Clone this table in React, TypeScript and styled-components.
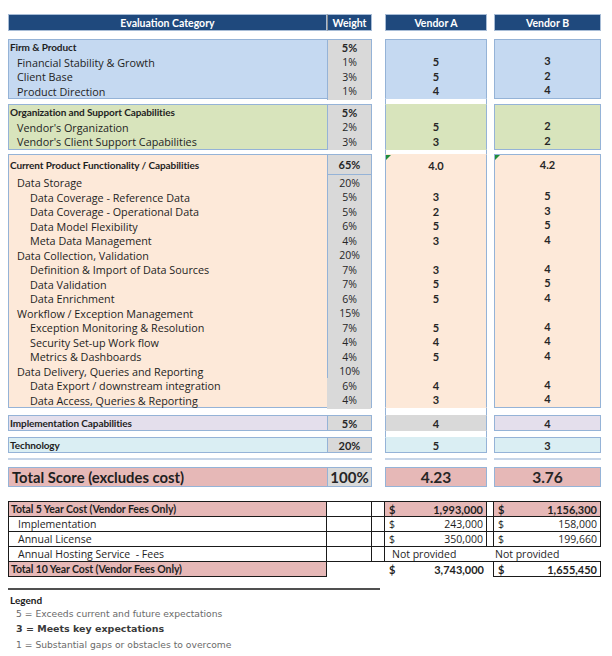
import React from 'react';
import styled, { createGlobalStyle } from 'styled-components';

const GlobalStyle = createGlobalStyle`
  html, body { margin: 0; padding: 0; background: #ffffff; }
  body { font-family: Lato, "Open Sans", sans-serif; color: #1e1e1e; }
  * { box-sizing: border-box; }
`;

const COLS = '319px 45px 13px 102px 7px 107px';
const COST_COLS = '319px 45px 6px 7px 102px 7px 107px';
const EDGE = '#95B3D7';
const ROW = 14.5;
const BODY_FONT = '"Open Sans", "Noto Sans", sans-serif';
const BOLD_FONT = 'Lato, "Open Sans", sans-serif';

const C = {
  navy: '#1F497D',
  blue: '#C5D9F1',
  green: '#D8E4BC',
  peach: '#FDE9D9',
  gray: '#D9D9D9',
  lavender: '#E4DFEC',
  cyan: '#DAEEF3',
  pink: '#E6B8B7',
  white: '#FFFFFF',
};

const Page = styled.div`
  width: 612px;
  height: 656px;
  padding: 14px 0 0 8px;
  overflow: hidden;
`;

const Band = styled.div<{ $h?: number }>`
  display: grid;
  grid-template-columns: ${COLS};
  ${(p) => (p.$h !== undefined ? `height: ${p.$h}px;` : '')}
`;

const HeadCell = styled.div<{ $col: number; $join?: boolean }>`
  grid-column: ${(p) => p.$col};
  height: 17px;
  background: ${C.navy};
  color: #ffffff;
  font-family: ${BOLD_FONT};
  font-weight: 700;
  font-size: 10.5px;
  display: flex;
  align-items: center;
  justify-content: center;
  border: 1px solid #A7BCD6;
  ${(p) => (p.$join ? 'border-left: 1px solid #8C8C8C;' : '')}
`;

const AGap = styled.div`
  grid-column: 4;
  border-left: 1px solid ${EDGE};
  border-right: 1px solid ${EDGE};
  background: #ffffff;
`;

const LeftBox = styled.div<{ $bg: string }>`
  grid-column: 1 / span 2;
  border: 1px solid ${EDGE};
  background: ${(p) => p.$bg};
  display: flex;
  flex-direction: column;
`;

const LRow = styled.div<{ $h?: number }>`
  display: grid;
  grid-template-columns: 318px 44px;
  height: ${(p) => p.$h ?? ROW}px;
`;

const Label = styled.div<{ $level: number; $title?: boolean; $big?: boolean }>`
  display: flex;
  align-items: center;
  padding-left: ${(p) => (p.$level === 0 ? (p.$big ? 3 : 1) : p.$level === 1 ? 8 : 21)}px;
  padding-bottom: ${(p) => (p.$title ? 0 : 1)}px;
  font-family: ${(p) => (p.$title ? BOLD_FONT : BODY_FONT)};
  font-size: ${(p) => (p.$big ? 14.8 : p.$title ? 10 : 10.8)}px;
  font-weight: ${(p) => (p.$title ? 700 : 400)};
  letter-spacing: ${(p) => (p.$title && !p.$big ? -0.1 : 0)}px;
  white-space: nowrap;
  color: #1e1e1e;
`;

const Weight = styled.div<{ $bold?: boolean; $big?: boolean; $underline?: boolean; $noEdge?: boolean }>`
  background: ${C.gray};
  border-left: 1px solid ${(p) => (p.$noEdge ? C.gray : EDGE)};
  ${(p) => (p.$underline ? `border-bottom: 1px solid ${EDGE};` : '')}
  display: flex;
  align-items: center;
  justify-content: center;
  padding-bottom: ${(p) => (p.$bold ? 0 : 1)}px;
  font-family: ${(p) => (p.$bold ? BOLD_FONT : BODY_FONT)};
  font-size: ${(p) => (p.$big ? 15 : p.$bold ? 11 : 10.5)}px;
  font-weight: ${(p) => (p.$bold ? 700 : 400)};
  color: #262626;
`;

const VendorA = styled.div<{ $bg: string; $first?: boolean; $last?: boolean }>`
  grid-column: 4;
  background: ${(p) => p.$bg};
  border-left: 1px solid ${EDGE};
  border-right: 1px solid ${EDGE};
  border-top: 1px solid ${(p) => (p.$first ? EDGE : p.$bg)};
  border-bottom: 1px solid ${(p) => (p.$last ? EDGE : p.$bg)};
  display: flex;
  flex-direction: column;
`;

const VendorB = styled.div<{ $bg: string }>`
  grid-column: 6;
  background: ${(p) => p.$bg};
  border: 1px solid ${EDGE};
  display: flex;
  flex-direction: column;
`;

const TotalBox = styled(VendorB)`
  grid-column: 4;
`;

const Score = styled.div<{ $h?: number; $big?: boolean }>`
  position: relative;
  height: ${(p) => p.$h ?? ROW}px;
  display: flex;
  align-items: center;
  justify-content: center;
  font-family: ${BOLD_FONT};
  font-size: ${(p) => (p.$big ? 15.5 : 11)}px;
  font-weight: 700;
  color: #262626;
`;

const Flag = styled.span`
  position: absolute;
  left: 0;
  top: 0;
  width: 0;
  height: 0;
  border-top: 5px solid #1E8C3A;
  border-right: 5px solid transparent;
`;

const RuleBand = styled(Band)`
  margin-top: 5px;
  height: 2px;
`;

const Rule = styled.div<{ $col: string }>`
  grid-column: ${(p) => p.$col};
  border-top: 2px solid #C6D5E8;
`;

/* ---------- cost table ---------- */

const CostGrid = styled.div`
  display: grid;
  grid-template-columns: ${COST_COLS};
  margin-top: 14px;
`;

type Side = { t?: boolean; r?: boolean; b?: boolean; l?: boolean };

const CostCell = styled.div<{ $s: Side; $bg?: string; $h: number; $bold?: boolean; $pad?: number }>`
  height: ${(p) => p.$h}px;
  background: ${(p) => p.$bg ?? '#ffffff'};
  border-top: ${(p) => (p.$s.t ? '1px solid #1a1a1a' : 'none')};
  border-right: ${(p) => (p.$s.r ? '1px solid #1a1a1a' : 'none')};
  border-bottom: ${(p) => (p.$s.b ? '1px solid #1a1a1a' : 'none')};
  border-left: ${(p) => (p.$s.l ? '1px solid #1a1a1a' : 'none')};
  display: flex;
  align-items: center;
  justify-content: space-between;
  padding: 0 3px 0 ${(p) => p.$pad ?? 3}px;
  font-family: ${(p) => (p.$bold ? BOLD_FONT : BODY_FONT)};
  font-size: 10.5px;
  font-weight: ${(p) => (p.$bold ? 700 : 400)};
  letter-spacing: ${(p) => (p.$bold ? -0.1 : 0)}px;
  white-space: pre;
  color: #1e1e1e;
`;

const Money = styled.span<{ $bold?: boolean }>`
  font-family: ${(p) => (p.$bold ? BOLD_FONT : BODY_FONT)};
  font-size: ${(p) => (p.$bold ? 11 : 10.5)}px;
  font-weight: ${(p) => (p.$bold ? 700 : 400)};
  letter-spacing: 0;
`;

/* ---------- legend ---------- */

const Legend = styled.div`
  margin-top: 11px;
  width: 372px;
  border-top: 2px solid #505050;
  padding-top: 3px;
  display: flex;
  flex-direction: column;
`;

const LegendTitle = styled.div`
  height: 13px;
  padding-left: 2px;
  font-family: ${BOLD_FONT};
  font-size: 10px;
  font-weight: 700;
  color: #1a1a1a;
  display: flex;
  align-items: center;
`;

const LegendItem = styled.div<{ $strong?: boolean; $h: number }>`
  height: ${(p) => p.$h}px;
  padding-left: 8px;
  font-family: "DejaVu Sans", Verdana, sans-serif;
  font-size: ${(p) => (p.$strong ? 9.5 : 9.2)}px;
  font-weight: ${(p) => (p.$strong ? 700 : 400)};
  color: ${(p) => (p.$strong ? '#3a3a3a' : '#6a6a6a')};
  display: flex;
  align-items: center;
  white-space: nowrap;
`;

/* ---------- data ---------- */

type Item = { label: string; level: number; weight: string; a?: string; b?: string; noEdge?: boolean };

type Section = {
  title: string;
  weight: string;
  bg: string;
  a?: string;
  b?: string;
  titleH?: number;
  items: Item[];
};

const sections: Section[] = [
  {
    title: 'Firm & Product',
    weight: '5%',
    bg: C.blue,
    items: [
      { label: 'Financial Stability & Growth', level: 1, weight: '1%', a: '5', b: '3' },
      { label: 'Client Base', level: 1, weight: '3%', a: '5', b: '2' },
      { label: 'Product Direction', level: 1, weight: '1%', a: '4', b: '4' },
    ],
  },
  {
    title: 'Organization and Support Capabilities',
    weight: '5%',
    bg: C.green,
    items: [
      { label: "Vendor's Organization", level: 1, weight: '2%', a: '5', b: '2' },
      { label: "Vendor's Client Support Capabilities", level: 1, weight: '3%', a: '3', b: '2' },
    ],
  },
  {
    title: 'Current Product Functionality / Capabilities',
    weight: '65%',
    bg: C.peach,
    a: '4.0',
    b: '4.2',
    titleH: 20,
    items: [
      { label: 'Data Storage', level: 1, weight: '20%' },
      { label: 'Data Coverage - Reference Data', level: 2, weight: '5%', a: '3', b: '5' },
      { label: 'Data Coverage - Operational Data', level: 2, weight: '5%', a: '2', b: '3' },
      { label: 'Data Model Flexibility', level: 2, weight: '6%', a: '5', b: '5' },
      { label: 'Meta Data Management', level: 2, weight: '4%', a: '3', b: '4' },
      { label: 'Data Collection, Validation', level: 1, weight: '20%' },
      { label: 'Definition & Import of Data Sources', level: 2, weight: '7%', a: '3', b: '4' },
      { label: 'Data Validation', level: 2, weight: '7%', a: '5', b: '5' },
      { label: 'Data Enrichment', level: 2, weight: '6%', a: '5', b: '4' },
      { label: 'Workflow / Exception Management', level: 1, weight: '15%' },
      { label: 'Exception Monitoring & Resolution', level: 2, weight: '7%', a: '5', b: '4' },
      { label: 'Security Set-up Work flow', level: 2, weight: '4%', a: '4', b: '4' },
      { label: 'Metrics & Dashboards', level: 2, weight: '4%', a: '5', b: '4' },
      { label: 'Data Delivery, Queries and Reporting', level: 1, weight: '10%' },
      { label: 'Data Export / downstream integration', level: 2, weight: '6%', a: '4', b: '4', noEdge: true },
      { label: 'Data Access, Queries & Reporting', level: 2, weight: '4%', a: '3', b: '4', noEdge: true },
    ],
  },
];

const gapsAfter = [5, 4.5];

function SectionBand({ s, first }: { s: Section; first?: boolean }) {
  const th = s.titleH ?? ROW;
  const flagged = s.a !== undefined;
  return (
    <Band>
      <LeftBox $bg={s.bg}>
        <LRow $h={th}>
          <Label $level={0} $title>{s.title}</Label>
          <Weight $bold $underline={flagged}>{s.weight}</Weight>
        </LRow>
        {s.items.map((it) => (
          <LRow key={it.label}>
            <Label $level={it.level}>{it.label}</Label>
            <Weight $noEdge={it.noEdge}>{it.weight}</Weight>
          </LRow>
        ))}
      </LeftBox>
      <VendorA $bg={s.bg} $first={first}>
        <Score $h={th}>
          {flagged && <Flag />}
          {s.a}
        </Score>
        {s.items.map((it) => (
          <Score key={it.label}>{it.a}</Score>
        ))}
      </VendorA>
      <VendorB $bg={s.bg}>
        <Score $h={th - 1}>
          {flagged && <Flag />}
          {s.b}
        </Score>
        {s.items.map((it) => (
          <Score key={it.label}>{it.b}</Score>
        ))}
      </VendorB>
    </Band>
  );
}

function SingleBand({
  title, weight, bg, aBg, a, b, last, h,
}: { title: string; weight: string; bg: string; aBg: string; a: string; b: string; last?: boolean; h: number }) {
  return (
    <Band>
      <LeftBox $bg={bg}>
        <LRow $h={h}>
          <Label $level={0} $title>{title}</Label>
          <Weight $bold>{weight}</Weight>
        </LRow>
      </LeftBox>
      <VendorA $bg={aBg} $last={last}>
        <Score $h={h}>{a}</Score>
      </VendorA>
      <VendorB $bg={bg}>
        <Score $h={h}>{b}</Score>
      </VendorB>
    </Band>
  );
}

type CostRowData = {
  label: string;
  total?: boolean;
  a: string | null;
  b: string | null;
  h: number;
  kind: 'top' | 'mid' | 'note' | 'end';
};

const costRows: CostRowData[] = [
  { label: 'Total 5 Year Cost (Vendor Fees Only)', total: true, a: '1,993,000', b: '1,156,300', h: 16, kind: 'top' },
  { label: 'Implementation', a: '243,000', b: '158,000', h: 15, kind: 'mid' },
  { label: 'Annual License', a: '350,000', b: '199,660', h: 15, kind: 'mid' },
  { label: 'Annual Hosting Service  - Fees', a: null, b: null, h: 15, kind: 'note' },
  { label: 'Total 10 Year Cost (Vendor Fees Only)', total: true, a: '3,743,000', b: '1,655,450', h: 15, kind: 'end' },
];

function CostRow({ r }: { r: CostRowData }) {
  const t = r.kind === 'top';
  const end = r.kind === 'end';
  const note = r.kind === 'note';
  const bg = r.total && !end ? C.pink : undefined;
  const money = (v: string | null, bold: boolean) =>
    v === null ? (
      <span>Not provided</span>
    ) : (
      <>
        <Money $bold={bold}>$</Money>
        <Money $bold={bold}>{v}</Money>
      </>
    );
  return (
    <>
      <CostCell $h={r.h} $s={{ t, l: true, r: true, b: true }} $bg={r.total ? C.pink : undefined} $bold={r.total} $pad={r.total ? 2 : 9}>
        {r.label}
      </CostCell>
      {[0, 1, 2].map((i) => (
        <CostCell key={i} $h={r.h} $s={end ? {} : { t, r: true, b: true }} />
      ))}
      <CostCell $h={r.h} $s={end ? {} : { t, r: !note, b: true }} $bg={bg} $pad={note ? 7 : 4}>
        {money(r.a, !!r.total)}
      </CostCell>
      <CostCell $h={r.h} $s={end ? { r: true } : { t, r: !note, b: true }} />
      <CostCell $h={r.h} $s={end ? { r: true, b: true } : { t, r: !note, b: true }} $bg={bg} $pad={note ? 1 : 4}>
        {money(r.b, !!r.total)}
      </CostCell>
    </>
  );
}

export default function App() {
  return (
    <>
      <GlobalStyle />
      <Page>
        <Band>
          <HeadCell $col={1}>Evaluation Category</HeadCell>
          <HeadCell $col={2} $join>Weight</HeadCell>
          <HeadCell $col={4}>Vendor A</HeadCell>
          <HeadCell $col={6}>Vendor B</HeadCell>
        </Band>
        <Band $h={8} />
        {sections.map((s, i) => (
          <React.Fragment key={s.title}>
            <SectionBand s={s} first={i === 0} />
            <Band $h={i < 2 ? gapsAfter[i] : 7}>
              <AGap />
            </Band>
          </React.Fragment>
        ))}
        <SingleBand title="Implementation Capabilities" weight="5%" bg={C.lavender} aBg={C.gray} a="4" b="4" h={14} />
        <Band $h={6}>
          <AGap />
        </Band>
        <SingleBand title="Technology" weight="20%" bg={C.cyan} aBg={C.cyan} a="5" b="3" last h={14} />
        <RuleBand>
          <Rule $col="1 / span 2" />
          <Rule $col="4" />
          <Rule $col="6" />
        </RuleBand>
        <Band $h={7} />
        <Band>
          <LeftBox $bg={C.pink}>
            <LRow $h={18}>
              <Label $level={0} $big $title>Total Score (excludes cost)</Label>
              <Weight $bold $big>100%</Weight>
            </LRow>
          </LeftBox>
          <TotalBox $bg={C.pink}>
            <Score $h={18} $big>4.23</Score>
          </TotalBox>
          <VendorB $bg={C.pink}>
            <Score $h={18} $big>3.76</Score>
          </VendorB>
        </Band>
        <CostGrid>
          {costRows.map((r) => (
            <CostRow key={r.label} r={r} />
          ))}
        </CostGrid>
        <Legend>
          <LegendTitle>Legend</LegendTitle>
          <LegendItem $h={15}>5 = Exceeds current and future expectations</LegendItem>
          <LegendItem $h={15} $strong>3 = Meets key expectations</LegendItem>
          <LegendItem $h={16}>1 = Substantial gaps or obstacles to overcome</LegendItem>
        </Legend>
      </Page>
    </>
  );
}
